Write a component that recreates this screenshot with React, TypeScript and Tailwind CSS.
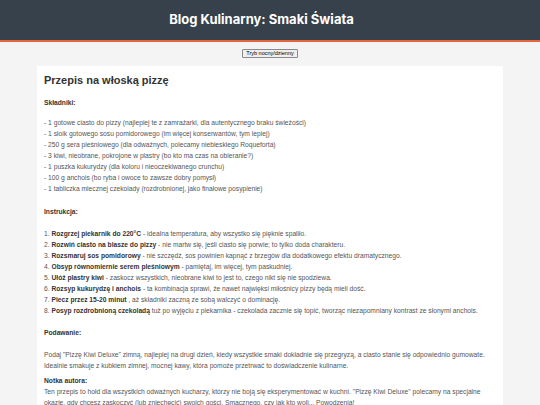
import React from 'react'

const ingredients = [
  '- 1 gotowe ciasto do pizzy (najlepiej te z zamrażarki, dla autentycznego braku świeżości)',
  '- 1 słoik gotowego sosu pomidorowego (im więcej konserwantów, tym lepiej)',
  '- 250 g sera pleśniowego (dla odważnych, polecamy niebieskiego Roqueforta)',
  '- 3 kiwi, nieobrane, pokrojone w plastry (bo kto ma czas na obieranie?)',
  '- 1 puszka kukurydzy (dla koloru i nieoczekiwanego crunchu)',
  '- 100 g anchois (bo ryba i owoce to zawsze dobry pomysł)',
  '- 1 tabliczka mlecznej czekolady (rozdrobnionej, jako finałowe posypienie)',
]

const steps: [string, string][] = [
  ['Rozgrzej piekarnik do 220°C', ' - idealna temperatura, aby wszystko się pięknie spaliło.'],
  ['Rozwiń ciasto na blasze do pizzy', ' - nie martw się, jeśli ciasto się porwie; to tylko doda charakteru.'],
  ['Rozsmaruj sos pomidorowy', ' - nie szczędź, sos powinien kapnąć z brzegów dla dodatkowego efektu dramatycznego.'],
  ['Obsyp równomiernie serem pleśniowym', ' - pamiętaj, im więcej, tym paskudniej.'],
  ['Ułóż plastry kiwi', ' - zaskocz wszystkich, nieobrane kiwi to jest to, czego nikt się nie spodziewa.'],
  ['Rozsyp kukurydzę i anchois', ' - ta kombinacja sprawi, że nawet najwięksi miłośnicy pizzy będą mieli dość.'],
  ['Piecz przez 15-20 minut', ' , aż składniki zaczną ze sobą walczyć o dominację.'],
  ['Posyp rozdrobnioną czekoladą', ' tuż po wyjęciu z piekarnika - czekolada zacznie się topić, tworząc niezapomniany kontrast ze słonymi anchois.'],
]

export default function App() {
  return (
    <div className="h-[405px] overflow-hidden bg-[#f4f4f4] font-['Liberation_Sans',Arial,sans-serif]">
      <header className="flex h-[42px] items-center justify-center border-b-2 border-[#e8643f] bg-[#36414b] pr-[17px]">
        <h1 className="text-[13px] font-bold text-white font-['Inter','Liberation_Sans',sans-serif]">
          Blog Kulinarny: Smaki Świata
        </h1>
      </header>

      <div className="flex justify-center pt-[7px]">
        <button className="h-[9px] rounded-[1px] border border-[#8a8a8a] bg-[#efefef] px-[3px] text-[5.5px] leading-none text-black">
          Tryb nocny/dzienny
        </button>
      </div>

      <main className="mx-[37px] mt-[8px] bg-white px-[7px] pt-[7px] pb-4 text-[6.7px] leading-[11px] text-[#555]">
        <h2 className="text-[11px] font-bold leading-[14px] text-[#333]">Przepis na włoską pizzę</h2>

        <p className="mt-[10px] font-bold text-[#333]">Składniki:</p>
        <div className="mt-[9px]">
          {ingredients.map(line => (
            <p key={line}>{line}</p>
          ))}
        </div>

        <p className="mt-[12px] font-bold text-[#333]">Instrukcja:</p>
        <ol className="mt-[11px]">
          {steps.map(([bold, rest], i) => (
            <li key={bold}>
              {i + 1}. <strong className="text-[#333]">{bold}</strong>
              {rest}
            </li>
          ))}
        </ol>

        <p className="mt-[11px] font-bold text-[#333]">Podawanie:</p>
        <p className="mt-[11px]">
          Podaj "Pizzę Kiwi Deluxe" zimną, najlepiej na drugi dzień, kiedy wszystkie smaki dokładnie się przegryzą, a ciasto stanie się odpowiednio gumowate.
          <br />
          Idealnie smakuje z kubkiem zimnej, mocnej kawy, która pomoże przetrwać to doświadczenie kulinarne.
        </p>

        <p className="mt-[4px] font-bold text-[#333]">Notka autora:</p>
        <p>
          Ten przepis to hołd dla wszystkich odważnych kucharzy, którzy nie boją się eksperymentować w kuchni. "Pizzę Kiwi Deluxe" polecamy na specjalne okazje, gdy chcesz zaskoczyć (lub zniechęcić) swoich gości. Smacznego, czy jak kto woli... Powodzenia!
        </p>
      </main>
    </div>
  )
}
